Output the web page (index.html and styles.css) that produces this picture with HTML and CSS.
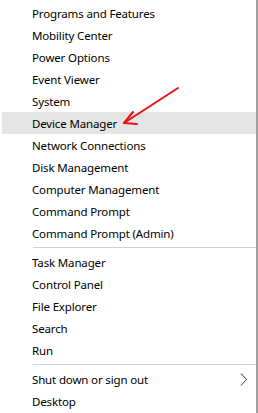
FILE: index.html
```html
<!doctype html>
<html lang="en">
<head>
    <meta charset="utf-8">
    <title>Quick Link Menu</title>
    <link rel="stylesheet" href="styles.css">
</head>
<body>
    <div class="menu">
        <ul class="menu-group">
            <li class="menu-item">Programs and Features</li>
            <li class="menu-item">Mobility Center</li>
            <li class="menu-item">Power Options</li>
            <li class="menu-item">Event Viewer</li>
            <li class="menu-item">System</li>
            <li class="menu-item active">Device Manager</li>
            <li class="menu-item">Network Connections</li>
            <li class="menu-item">Disk Management</li>
            <li class="menu-item">Computer Management</li>
            <li class="menu-item">Command Prompt</li>
            <li class="menu-item">Command Prompt (Admin)</li>
        </ul>
        <div class="separator"></div>
        <ul class="menu-group">
            <li class="menu-item">Task Manager</li>
            <li class="menu-item">Control Panel</li>
            <li class="menu-item">File Explorer</li>
            <li class="menu-item">Search</li>
            <li class="menu-item">Run</li>
        </ul>
        <div class="separator"></div>
        <ul class="menu-group">
            <li class="menu-item has-sub">
                Shut down or sign out
                <svg class="chevron" width="8" height="13" viewBox="0 0 8 13">
                    <path d="M1 0.5 L6.5 6.5 L1 12.5" fill="none" stroke="#333" stroke-width="1"/>
                </svg>
            </li>
            <li class="menu-item">Desktop</li>
        </ul>

        <!-- red annotation arrow -->
        <svg class="pointer" width="258" height="140" viewBox="0 0 258 140">
            <g stroke="#ee1111" stroke-width="2" stroke-linecap="round" fill="none">
                <path d="M178 88 L124 123"/>
                <path d="M124 123 L133 112"/>
                <path d="M124 123 L137 124"/>
            </g>
        </svg>
    </div>
</body>
</html>
```

FILE: styles.css
```css
body {
    margin: 0;
    background-color: #fff;
    font-family: "Noto Sans", "Open Sans", Arial, sans-serif;
    font-size: 11.5px;
    letter-spacing: -0.15px;
    color: #000;
}
.menu {
    position: relative;
    width: 254px;
    height: 411px;
    padding: 2px 0 0 2px;
    border-right: 2px solid #a0a0a0;
    background-color: #fff;
}
.menu-group {
    list-style: none;
    margin: 0;
    padding: 0;
}
.menu-item {
    display: flex;
    align-items: center;
    justify-content: space-between;
    height: 22px;
    padding: 0 0 0 30px;
    white-space: nowrap;
}
.menu-item.active {
    background-color: #e5e5e5;
}
.chevron {
    margin-right: 8px;
}
.separator {
    height: 1px;
    margin: 3px 0 3px 31px;
    background-color: #cfcfcf;
}
.pointer {
    position: absolute;
    left: 0;
    top: 0;
}
```
